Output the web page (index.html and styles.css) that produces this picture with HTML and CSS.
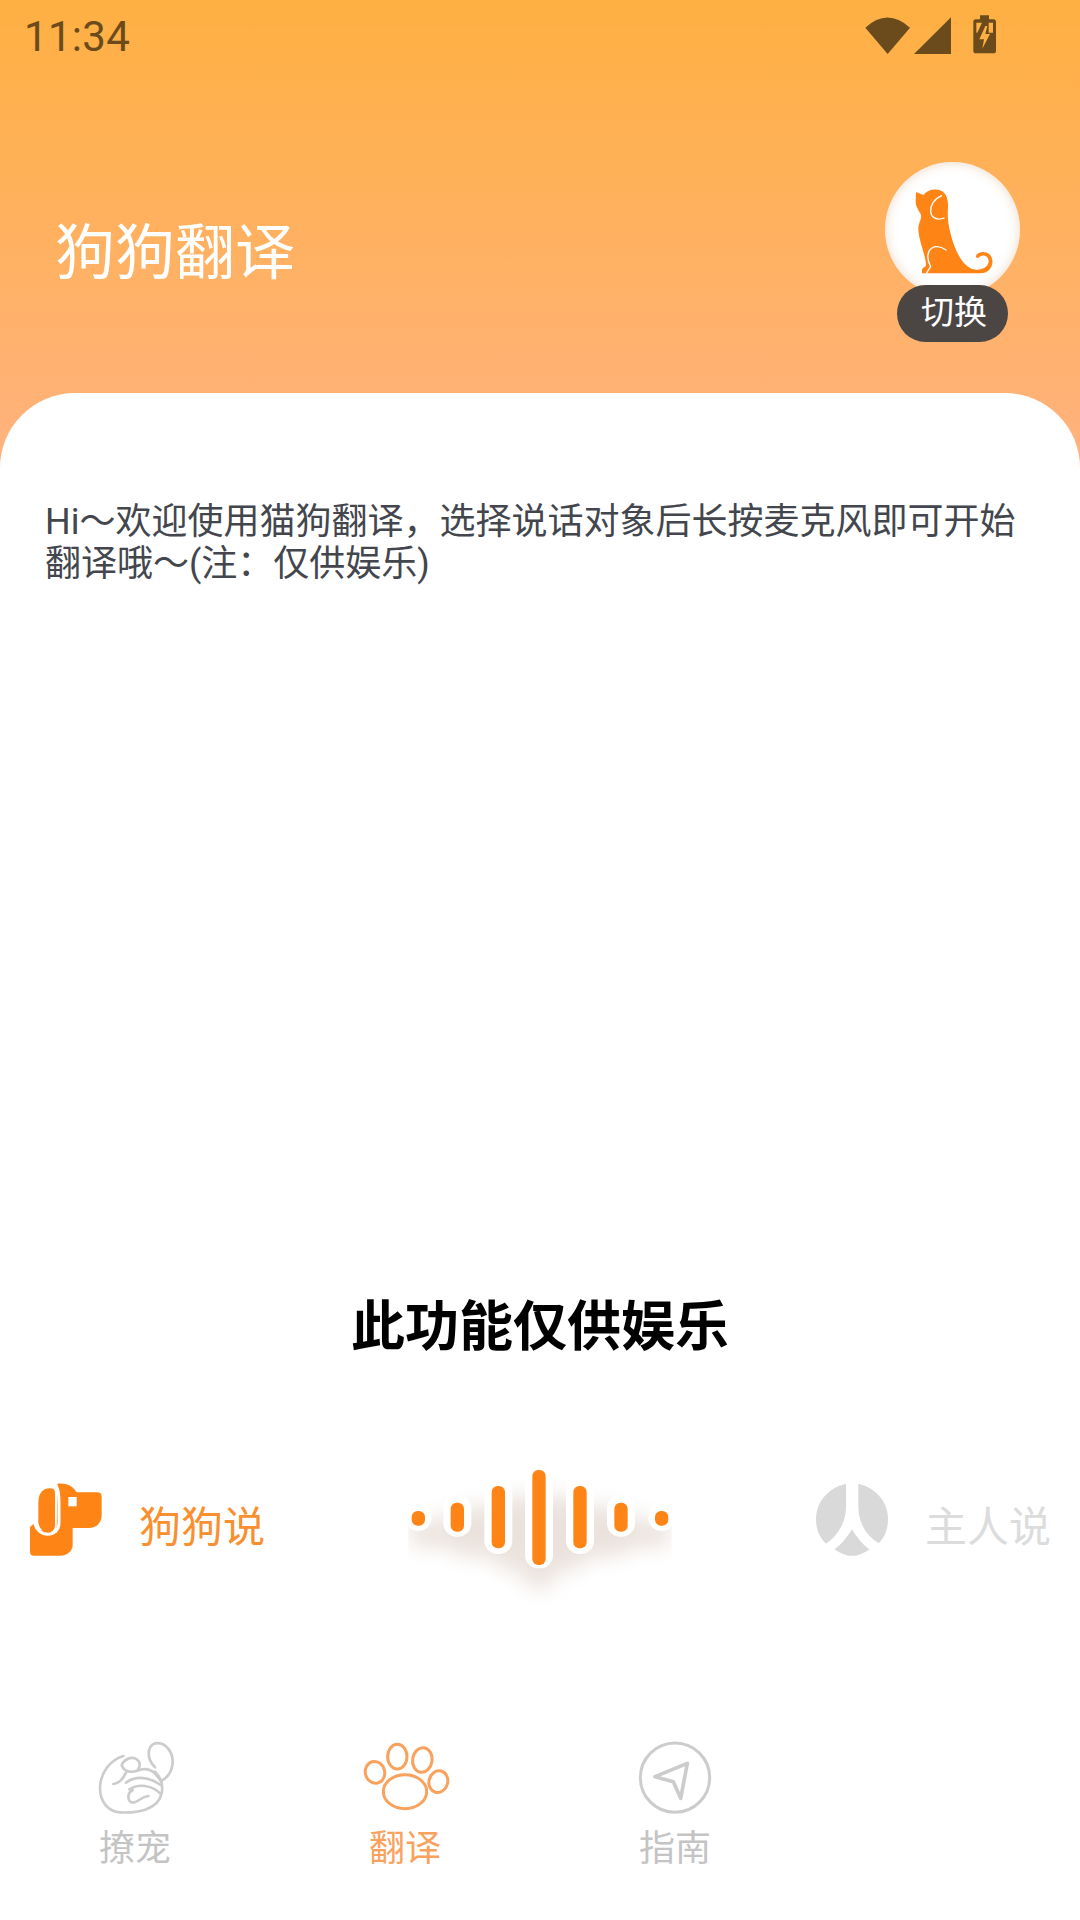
FILE: index.html
```html
<!DOCTYPE html>
<html lang="zh-CN">
<head>
<meta charset="utf-8">
<title>狗狗翻译</title>
<link rel="stylesheet" href="styles.css">
</head>
<body>
<div class="app">
  <div class="status">
    <span class="time">11:34</span>
    <svg class="status-icons" viewBox="0 0 540 210">
      <path class="st" d="M76 83Q142 22 210 83L143 162Z"/>
      <path class="st" d="M222 162L333 52V162Z"/>
      <path class="st" d="M420 58V46H447V58H460Q468 58 468 66V152Q468 160 460 160H408Q400 160 400 152V66Q400 58 408 58Z"/>
      <path class="st-cut" d="M409 68H426L412 98H409ZM446 68H459V98H446ZM436 78L418 118H432L427 146L450 102H436L442 78Z"/>
    </svg>
  </div>
  <header class="head">
    <h1 class="title">狗狗翻译</h1>
    <div class="switch">
      <div class="avatar">
        <svg class="avatar-dog" viewBox="75 64 405 405">
          <path class="dog-fill" d="M168 154L190 163C200 148 220 143 238 148C256 153 266 172 264 200C262 225 264 250 272 280C282 320 300 365 330 382C345 390 365 388 378 378C390 368 388 348 374 345C366 343 360 347 354 352C348 352 346 346 350 342C358 333 376 331 388 341C402 354 400 378 385 390C376 397 365 398 350 398H186L186 386C192 378 198 378 198 372C196 340 176 300 175 265C175 245 187 235 182 220C176 208 166 196 167 180Z"/>
          <path class="dog-line" d="M245 165C222 175 210 195 212 213C214 232 232 240 252 232"/>
          <path class="dog-line" d="M258 328C240 314 218 314 208 330C200 345 205 365 212 378C208 384 204 388 200 397"/>
        </svg>
      </div>
      <div class="pill">切换</div>
    </div>
  </header>
  <main class="card">
    <p class="intro">Hi～欢迎使用猫狗翻译，选择说话对象后长按麦克风即可开始翻译哦～(注：仅供娱乐)</p>
    <h2 class="notice">此功能仅供娱乐</h2>
    <section class="talk">
      <div class="speaker speaker-dog">
        <svg class="speaker-icon" viewBox="90 130 216 219">
          <path class="or-fill" d="M90 262L104 250L118 270L170 280L172 132C195 128 220 138 230 158H292Q305 158 305 171V225C305 250 290 265 265 265H218V315C218 335 200 348 180 348H102Q90 348 90 336Z"/>
          <path class="or-fill" d="M150 146C125 146 115 165 115 190V245C115 265 130 278 145 278C158 278 165 268 165 255V160C165 150 160 146 150 146Z"/>
          <path class="or-line" d="M168 138C176 150 177 170 177 190V250C177 272 160 284 143 284C125 284 108 270 104 250"/>
          <rect class="white-fill" x="205" y="172" width="25" height="28"/>
        </svg>
        <span class="speaker-name">狗狗说</span>
      </div>
      <svg class="wave" viewBox="0 0 900 540">
        <defs>
          <clipPath id="waveClip"><rect x="55" y="0" width="790" height="540"/></clipPath>
          <filter id="waveBlur" x="-20%" y="-30%" width="140%" height="170%"><feGaussianBlur stdDeviation="30"/></filter>
        </defs>
        <g clip-path="url(#waveClip)">
          <g class="wave-shadow" filter="url(#waveBlur)">
            <rect x="55" y="240" width="790" height="80" rx="40"/>
            <rect x="170" y="200" width="560" height="150" rx="60"/>
            <rect x="300" y="170" width="300" height="220" rx="60"/>
            <rect x="395" y="160" width="105" height="285" rx="50"/>
          </g>
          <rect class="wave-halo" x="45" y="190" width="80" height="82" rx="38"/>
          <rect class="wave-halo" x="160" y="165" width="84" height="125" rx="40"/>
          <rect class="wave-halo" x="283" y="115" width="84" height="227" rx="40"/>
          <rect class="wave-halo" x="405" y="65" width="84" height="320" rx="40"/>
          <rect class="wave-halo" x="528" y="115" width="84" height="227" rx="40"/>
          <rect class="wave-halo" x="651" y="165" width="84" height="125" rx="40"/>
          <rect class="wave-halo" x="775" y="190" width="80" height="82" rx="38"/>
        </g>
        <rect class="bar" x="65" y="213" width="40" height="44" rx="18"/>
        <rect class="bar" x="182" y="188" width="40" height="87" rx="18"/>
        <rect class="bar" x="305" y="138" width="40" height="187" rx="18"/>
        <rect class="bar" x="427" y="90" width="40" height="285" rx="18"/>
        <rect class="bar" x="550" y="138" width="40" height="187" rx="18"/>
        <rect class="bar" x="673" y="188" width="40" height="87" rx="18"/>
        <rect class="bar" x="795" y="213" width="40" height="44" rx="18"/>
      </svg>
      <div class="speaker speaker-owner">
        <svg class="speaker-icon" viewBox="78 100 216 218">
          <path class="grey-fill" d="M168 102C115 115 78 155 78 208C78 240 90 265 108 281C135 265 168 225 168 170Z"/>
          <path class="grey-fill" d="M205 102C257 115 294 155 294 208C294 240 282 265 266 280C235 262 205 225 205 170Z"/>
          <path class="grey-fill" d="M186 238C170 265 152 285 134 298C150 310 168 318 186 318C205 318 222 310 238 298C220 285 200 262 186 238Z"/>
        </svg>
        <span class="speaker-name speaker-name-off">主人说</span>
      </div>
    </section>
    <nav class="tabs">
      <div class="tab">
        <svg class="tab-icon" viewBox="15 30 300 240">
          <g class="tab-stroke thin">
            <path d="M130 78C90 90 60 130 60 175C60 215 85 245 120 247C170 250 235 240 245 190C250 165 245 145 225 125"/>
            <path d="M225 112C200 88 200 50 225 40C258 34 280 68 278 100C275 128 258 145 245 152"/>
            <path d="M125 106C130 90 150 80 165 85C183 94 182 110 172 122C152 128 132 125 125 106Z"/>
            <path d="M100 162C120 160 130 145 138 128"/>
            <path d="M172 122C192 114 212 118 225 130L245 155"/>
            <path d="M138 158C160 140 200 135 242 165"/>
            <path d="M158 180C140 190 142 215 158 218C175 218 182 200 205 198"/>
            <path d="M148 178C175 160 215 165 240 190"/>
          </g>
        </svg>
        <span class="tab-label">撩宠</span>
      </div>
      <div class="tab">
        <svg class="tab-icon" viewBox="45 30 300 240">
          <g class="tab-stroke active">
            <ellipse cx="195" cy="185" rx="65" ry="51"/>
            <ellipse cx="105" cy="127" rx="29" ry="33" transform="rotate(-15 105 127)"/>
            <ellipse cx="172" cy="80" rx="29" ry="37"/>
            <ellipse cx="247" cy="90" rx="29" ry="37" transform="rotate(8 247 90)"/>
            <ellipse cx="295" cy="155" rx="28" ry="33" transform="rotate(15 295 155)"/>
          </g>
        </svg>
        <span class="tab-label tab-label-active">翻译</span>
      </div>
      <div class="tab">
        <svg class="tab-icon" viewBox="855 30 300 240">
          <g class="tab-stroke">
            <circle cx="1005" cy="143" r="104"/>
            <path class="arrow" d="M945 140L1042 100L1022 205L1000 155Z"/>
          </g>
        </svg>
        <span class="tab-label">指南</span>
      </div>
    </nav>
  </main>
</div>
</body>
</html>
```
FILE: styles.css
```css
* { box-sizing: border-box; }
html, body { margin: 0; padding: 0; }
body { font-family: Roboto, "Noto Sans CJK SC", sans-serif; }
.app {
  width: 1080px;
  height: 1920px;
  display: flex;
  flex-direction: column;
  background: linear-gradient(180deg, #ffb042 0, #ffb280 480px, #ffb280 100%);
  overflow: hidden;
}
.status {
  height: 72px;
  flex: none;
  display: flex;
  justify-content: space-between;
  padding: 0 60px 0 24px;
}
.time { font-size: 42px; line-height: 74px; letter-spacing: 0.3px; color: #6b4a1c; }
.status-icons { width: 180px; height: 70px; }
.st { fill: #6b4a1c; }
.st-cut { fill: #ffb045; }
.head {
  height: 321px;
  flex: none;
  display: flex;
  justify-content: space-between;
  align-items: flex-start;
  padding: 0 60px 0 55px;
}
.title {
  margin: 146px 0 0;
  font-size: 60px;
  line-height: 72px;
  font-weight: 400;
  color: #fff;
}
.switch {
  margin-top: 90px;
  display: flex;
  flex-direction: column;
  align-items: center;
}
.avatar {
  width: 135px;
  height: 135px;
  border-radius: 50%;
  background: #fff;
  box-shadow: inset 0 0 12px rgba(230, 200, 170, 0.7);
}
.avatar-dog { display: block; width: 135px; height: 135px; }
.dog-fill { fill: #fe8416; }
.dog-line { fill: none; stroke: #fff; stroke-width: 4; stroke-linecap: round; }
.pill {
  margin-top: -12px;
  width: 111px;
  height: 57px;
  border-radius: 29px;
  background: #4b4644;
  color: #fff;
  font-size: 33px;
  line-height: 55px;
  text-align: center;
  text-indent: 3px;
  position: relative;
}
.card {
  flex: 1;
  background: #fff;
  border-radius: 75px 75px 0 0;
  display: flex;
  flex-direction: column;
  padding: 108px 0 49px;
}
.intro {
  margin: 0;
  padding: 0 45px;
  font-size: 36px;
  line-height: 42px;
  color: #43464d;
}
.notice {
  margin: auto 0 0;
  font-size: 54px;
  line-height: 70px;
  font-weight: 700;
  color: #000;
  text-align: center;
}
.talk {
  margin-top: 77px;
  height: 180px;
  padding: 0 30px;
  display: flex;
  justify-content: space-between;
  align-items: flex-start;
}
.speaker {
  margin-top: 43px;
  display: flex;
  align-items: flex-start;
  width: 234px;
}
.speaker-icon { width: 72px; height: 73px; flex: none; }
.speaker-name {
  margin: 24px 0 0 37px;
  font-size: 42px;
  line-height: 42px;
  white-space: nowrap;
  color: #f98f2f;
}
.speaker-name-off { color: #dcdcdc; }
.or-fill { fill: #fe8416; }
.or-line { fill: none; stroke: #fff; stroke-width: 9; stroke-linecap: round; }
.white-fill { fill: #fff; }
.grey-fill { fill: #d9d9d9; }
.wave { width: 300px; height: 180px; flex: none; }
.wave-shadow { fill: #c8b0a0; opacity: 0.36; }
.wave-halo { fill: #fff; }
.bar { fill: #fe8416; }
.tabs {
  margin-top: 120px;
  display: grid;
  grid-template-columns: repeat(4, 270px);
}
.tab { display: flex; flex-direction: column; align-items: center; }
.tab-icon { width: 100px; height: 80px; display: block; }
.tab-stroke { fill: none; stroke: #cccccc; stroke-width: 9; stroke-linejoin: round; stroke-linecap: round; }
.tab-stroke.active { stroke: #f9a25e; }
.tab-stroke.thin { stroke-width: 8; }
.arrow { stroke-width: 11; }
.tab-label {
  margin-top: 7px;
  font-size: 36px;
  line-height: 44px;
  color: #c4c4c4;
}
.tab-label-active { color: #f9a25e; }
```
